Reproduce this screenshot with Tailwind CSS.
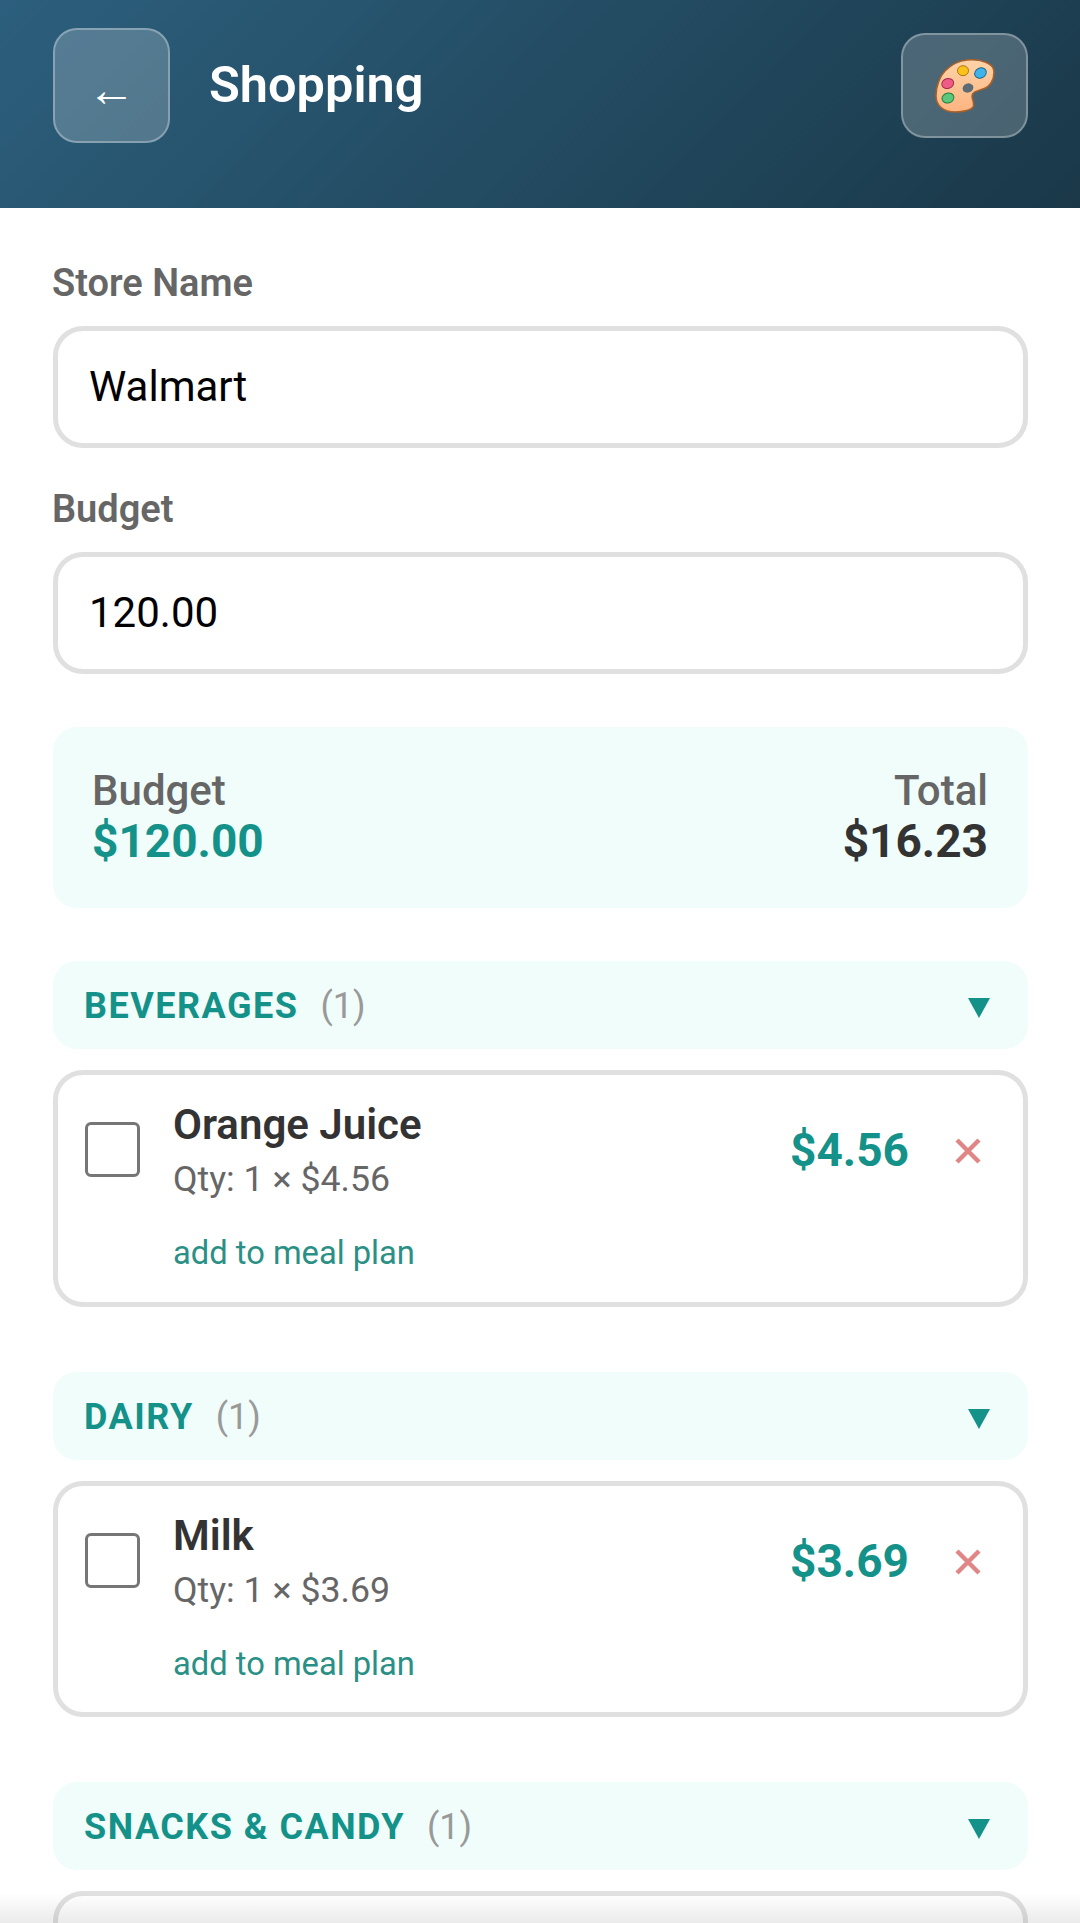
<!DOCTYPE html>
<html lang="en">
<head>
  <meta charset="UTF-8" />
  <meta name="viewport" content="width=device-width, initial-scale=1.0"/>
  <title>Shopping</title>
  <script src="https://cdn.jsdelivr.net/npm/@tailwindcss/browser@4"></script>
</head>
<body class="bg-white font-['Roboto',sans-serif]">
<div class="h-[1923px] overflow-hidden relative">

  <!-- Header -->
  <header class="h-[208px] bg-linear-[135deg] from-[#2c5f7d] to-[#1a3848] flex items-start justify-between pl-[53px] pr-[52px]">
    <div class="flex items-start gap-[39px]">
      <button class="w-[117px] h-[115px] mt-[28px] rounded-[24px] bg-white/20 border-[2px] border-white/30 text-white text-[48px] leading-none font-['Liberation_Sans',sans-serif] pt-[8px]">←</button>
      <h1 class="text-white text-[50.500px] leading-[56px] font-semibold mt-[57px]">Shopping</h1>
    </div>
    <button class="w-[127px] h-[105px] mt-[33px] rounded-[24px] bg-white/20 border-[2px] border-white/30 flex items-center justify-center">
      <svg width="60" height="54" viewBox="0 0 60 54">
        <defs>
          <linearGradient id="palette" x1="0" y1="0" x2="0" y2="1">
            <stop offset="0" stop-color="#fdd3a8"/>
            <stop offset="1" stop-color="#fdb480"/>
          </linearGradient>
        </defs>
        <path d="M32 1C46 0 59 4 59 13C59 21 55 28 48 30C42 32 37 33 37 37C37 40 39 43 38.500 47C37 51 28 53 20 53C9 53 1 47 1 37C1 27 5 17 10 12C16 6 24 1.500 32 1Z" fill="url(#palette)" stroke="#a8602a" stroke-width="1.500"/>
        <ellipse cx="28" cy="11.700" rx="5.500" ry="5" fill="#fcc21b" stroke="#a9780b" stroke-width="1"/>
        <ellipse cx="45.500" cy="14" rx="6" ry="5" fill="#40b4ea" stroke="#17688f" stroke-width="1" transform="rotate(-25 45.500 14)"/>
        <ellipse cx="12.700" cy="24.500" rx="6" ry="5" fill="#ee5c86" stroke="#a52a52" stroke-width="1" transform="rotate(-15 12.700 24.500)"/>
        <ellipse cx="13" cy="39" rx="6" ry="5" fill="#5cc67a" stroke="#1f7f42" stroke-width="1" transform="rotate(-15 13 39)"/>
        <ellipse cx="33" cy="29" rx="5.500" ry="4.500" fill="#5d6c74" transform="rotate(-20 33 29)"/>
      </svg>
    </button>
  </header>

  <main class="pl-[53px] pr-[52px]">
    <!-- Form -->
    <label class="block mt-[53px] -ml-[1px] text-[38px] leading-[44px] font-semibold text-[#666666]">Store Name</label>
    <input value="Walmart" class="block w-full h-[122px] mt-[21px] px-[31px] pb-[2px] rounded-[30px] border-[5px] border-[#e0e0e0] text-[42px] text-black" />
    <label class="block mt-[39px] -ml-[1px] text-[38px] leading-[44px] font-semibold text-[#666666]">Budget</label>
    <input value="120.00" class="block w-full h-[122px] mt-[21px] px-[31px] pb-[2px] rounded-[30px] border-[5px] border-[#e0e0e0] text-[42px] text-black" />

    <!-- Summary -->
    <section class="h-[181px] mt-[53px] rounded-[24px] bg-[#f0fdfa] pl-[39px] pr-[40px] py-[40px] flex justify-between">
      <div>
        <p class="text-[42px] leading-[48px] font-medium text-[#666666]">Budget</p>
        <p class="text-[46px] leading-[52px] font-bold text-[#14928a]">$120.00</p>
      </div>
      <div class="text-right">
        <p class="text-[42px] leading-[48px] font-medium text-[#666666]">Total</p>
        <p class="text-[46px] leading-[52px] font-bold text-[#333333]">$16.23</p>
      </div>
    </section>

    <!-- Beverages -->
    <section class="mt-[53px]">
      <div class="h-[88px] rounded-[24px] bg-[#f0fdfa] pl-[31px] pr-[38px] pt-[2px] flex items-center justify-between">
        <div class="flex items-center gap-[22px]">
          <span class="text-[36px] font-bold tracking-[1.500px] text-[#14928a]">BEVERAGES</span>
          <span class="text-[36px] text-[#999999]">(1)</span>
        </div>
        <svg width="22" height="20" viewBox="0 0 22 20" class="mt-[4px]"><polygon points="0,0 22,0 11,20" fill="#14928a"/></svg>
      </div>
      <div class="h-[237px] mt-[21px] rounded-[30px] border-[5px] border-[#e0e0e0] pl-[27px] pr-[42px] pt-[25px] flex items-start">
        <input type="checkbox" class="appearance-none shrink-0 w-[55px] h-[55px] mt-[22px] rounded-[6px] border-[3px] border-[#767676] bg-white" />
        <div class="ml-[33px] flex-1">
          <h3 class="text-[42px] leading-[50px] font-semibold text-[#333333]">Orange Juice</h3>
          <p class="text-[35.700px] leading-[42px] mt-[8px] text-[#666666]">Qty: 1 × $4.56</p>
          <a class="block text-[32.700px] leading-[40px] mt-[33px] text-[#2a9086]">add to meal plan</a>
        </div>
        <span class="text-[46px] leading-[56px] mt-[22px] font-bold text-[#14928a]">$4.56</span>
        <svg width="26" height="26" viewBox="0 0 26 26" class="ml-[46px] mt-[38px]"><path d="M2 2L24 24M24 2L2 24" stroke="#e08686" stroke-width="4.500" fill="none"/></svg>
      </div>
    </section>

    <!-- Dairy -->
    <section class="mt-[65px]">
      <div class="h-[88px] rounded-[24px] bg-[#f0fdfa] pl-[31px] pr-[38px] pt-[2px] flex items-center justify-between">
        <div class="flex items-center gap-[22px]">
          <span class="text-[36px] font-bold tracking-[1.500px] text-[#14928a]">DAIRY</span>
          <span class="text-[36px] text-[#999999]">(1)</span>
        </div>
        <svg width="22" height="20" viewBox="0 0 22 20" class="mt-[4px]"><polygon points="0,0 22,0 11,20" fill="#14928a"/></svg>
      </div>
      <div class="h-[236px] mt-[21px] rounded-[30px] border-[5px] border-[#e0e0e0] pl-[27px] pr-[42px] pt-[25px] flex items-start">
        <input type="checkbox" class="appearance-none shrink-0 w-[55px] h-[55px] mt-[22px] rounded-[6px] border-[3px] border-[#767676] bg-white" />
        <div class="ml-[33px] flex-1">
          <h3 class="text-[42px] leading-[50px] font-semibold text-[#333333]">Milk</h3>
          <p class="text-[35.700px] leading-[42px] mt-[8px] text-[#666666]">Qty: 1 × $3.69</p>
          <a class="block text-[32.700px] leading-[40px] mt-[33px] text-[#2a9086]">add to meal plan</a>
        </div>
        <span class="text-[46px] leading-[56px] mt-[22px] font-bold text-[#14928a]">$3.69</span>
        <svg width="26" height="26" viewBox="0 0 26 26" class="ml-[46px] mt-[38px]"><path d="M2 2L24 24M24 2L2 24" stroke="#e08686" stroke-width="4.500" fill="none"/></svg>
      </div>
    </section>

    <!-- Snacks -->
    <section class="mt-[65px]">
      <div class="h-[88px] rounded-[24px] bg-[#f0fdfa] pl-[31px] pr-[38px] pt-[2px] flex items-center justify-between">
        <div class="flex items-center gap-[22px]">
          <span class="text-[36px] font-bold tracking-[1.500px] text-[#14928a]">SNACKS &amp; CANDY</span>
          <span class="text-[36px] text-[#999999]">(1)</span>
        </div>
        <svg width="22" height="20" viewBox="0 0 22 20" class="mt-[4px]"><polygon points="0,0 22,0 11,20" fill="#14928a"/></svg>
      </div>
      <div class="h-[235px] mt-[21px] rounded-[30px] border-[5px] border-[#e0e0e0]"></div>
    </section>
  </main>

  <!-- bottom fade -->
  <div class="absolute left-0 right-0 bottom-0 h-[30px] bg-linear-to-b from-black/0 to-black/8"></div>
</div>
</body>
</html>
